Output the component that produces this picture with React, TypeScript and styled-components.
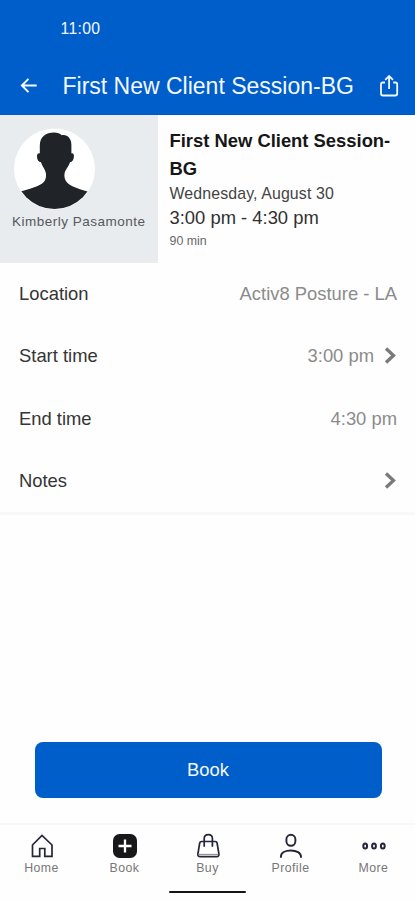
import React from "react";
import styled, { createGlobalStyle } from "styled-components";

const GlobalStyle = createGlobalStyle`
  * { box-sizing: border-box; }
  body { margin: 0; background: #fefefe; font-family: "Liberation Sans", Arial, sans-serif; }
  button { font-family: inherit; border: 0; padding: 0; background: none; }
  svg { display: block; flex: none; }
`;

const Screen = styled.div`
  width: 415px;
  height: 900px;
  display: flex;
  flex-direction: column;
  overflow: hidden;
  background: #fefefe;
`;

const Header = styled.header`
  height: 115px;
  flex: none;
  color: #f4f8ff;
  background: #005ecb;
  border-bottom: 1px solid #0057c6;
`;

const StatusBar = styled.div`
  height: 57px;
  padding-left: 60.5px;
  font-size: 15.7px;
  line-height: 57px;
  letter-spacing: 0.35px;
`;

const TitleBar = styled.div`
  height: 57px;
  display: flex;
  align-items: center;
  padding: 0 15px 0 17px;
`;

const Title = styled.h1`
  flex: 1;
  margin: 0 0 0 21.5px;
  font-size: 23px;
  line-height: 30px;
  font-weight: 400;
  white-space: nowrap;
`;

const Summary = styled.section`
  height: 148px;
  flex: none;
  display: flex;
`;

const StaffPanel = styled.div`
  width: 158px;
  padding: 13px 0 0 12px;
  background: #e8ecef;
`;

const Avatar = styled.svg`
  margin-left: 1px;
`;

const StaffName = styled.div`
  margin-top: 2px;
  color: #55585b;
  font-size: 13.5px;
  line-height: 20px;
  letter-spacing: 0.5px;
  white-space: nowrap;
`;

const SessionInfo = styled.div`
  flex: 1;
  padding: 12px 0 0 11.5px;
  color: #232323;
`;

const SessionName = styled.h2`
  margin: 0;
  font-size: 18.4px;
  line-height: 27.5px;
  color: #161616;
`;

const SessionDate = styled.div`
  margin-top: 1px;
  font-size: 15.9px;
  line-height: 22px;
  letter-spacing: 0.12px;
  color: #444;
`;

const SessionTime = styled.div`
  font-size: 18.4px;
  line-height: 26px;
  color: #303030;
`;

const Duration = styled.div`
  font-size: 12.4px;
  line-height: 20px;
  color: #686868;
`;

const Details = styled.section`
  height: 252px;
  flex: none;
  border-bottom: 3px solid #f8f8f8;
`;

const DetailRow = styled.div`
  height: 62.3px;
  display: flex;
  align-items: center;
  justify-content: space-between;
  padding: 0 18px 0 19px;
  font-size: 18.4px;
  color: #353535;
`;

const DetailValue = styled.div`
  display: flex;
  align-items: center;
  gap: 10px;
  color: #8b8b8b;
`;

const Action = styled.main`
  flex: 1;
  display: flex;
  align-items: flex-end;
  padding: 0 33.5px 25px 34.5px;
`;

const BookButton = styled.button`
  width: 100%;
  height: 56px;
  border-radius: 8px;
  background: #005ecb;
  color: #f4f8ff;
  font-size: 18.4px;
`;

const Navigation = styled.nav`
  height: 77px;
  flex: none;
  display: flex;
  flex-direction: column;
  border-top: 2px solid #f7f7f7;
`;

const Tabs = styled.div`
  height: 66px;
  display: grid;
  grid-template-columns: repeat(5, 1fr);
`;

const Tab = styled.button`
  display: flex;
  flex-direction: column;
  align-items: center;
  padding-top: 6px;
  color: #777;
  font-size: 12.3px;
  line-height: 14px;
  letter-spacing: 0.45px;
`;

const HomeIndicator = styled.div`
  width: 77px;
  height: 2px;
  align-self: center;
  border-radius: 1px;
  background: #141414;
`;

const Chevron = () => (
  <svg width="13" height="18" viewBox="0 0 13 18" fill="none" stroke="#7a7a7a" strokeWidth="3.3">
    <path d="m2 1.5 7.5 7L2 15.5" />
  </svg>
);

type DetailProps = { label: string; value?: string; opens?: boolean };

const Detail = ({ label, value, opens }: DetailProps) => (
  <DetailRow>
    <span>{label}</span>
    <DetailValue>
      {value}
      {opens && <Chevron />}
    </DetailValue>
  </DetailRow>
);

const iconProps = {
  width: 30,
  height: 30,
  viewBox: "0 0 30 30",
  fill: "none",
  stroke: "#25253a",
  strokeWidth: 1.7,
};

const tabs = [
  {
    label: "Home",
    icon: (
      <svg {...iconProps}>
        <path d="M5.5 14 15 4.5l10 9.5v11.3h-7.2v-7.8h-5.1v7.8H5.5Z" />
      </svg>
    ),
  },
  {
    label: "Book",
    icon: (
      <svg {...iconProps} stroke="#fff" strokeWidth="2.3">
        <rect x="3" y="3" width="24" height="24" rx="6.5" fill="#18181a" stroke="none" />
        <path d="M15 8.5v13M8.5 15h13" />
      </svg>
    ),
  },
  {
    label: "Buy",
    icon: (
      <svg {...iconProps}>
        <path d="M8.6 10.5h13.6c1.1 0 1.7.5 1.9 1.5l1.8 10.8c.3 1.8-.6 2.9-2.3 2.9H7.2c-1.7 0-2.6-1.1-2.3-2.9L6.7 12c.2-1 .8-1.5 1.9-1.5ZM11.2 15.7V7.6c0-2.4 1.4-4 4.1-4s4.1 1.6 4.1 4v8.1" />
        <path d="M5.5 23.4h19.8" stroke="#85858f" strokeWidth="1" />
      </svg>
    ),
  },
  {
    label: "Profile",
    icon: (
      <svg {...iconProps} strokeWidth="1.9">
        <rect x="10.4" y="3.8" width="9" height="11" rx="4.5" />
        <path d="M4.9 26.8v-1c0-4 4.4-6.3 10-6.3s10.1 2.3 10.1 6.3v1" />
      </svg>
    ),
  },
  {
    label: "More",
    icon: (
      <svg {...iconProps} strokeWidth="2">
        <ellipse cx="6.2" cy="15" rx="1.9" ry="2.5" />
        <ellipse cx="15" cy="15" rx="1.9" ry="2.5" />
        <ellipse cx="23.8" cy="15" rx="1.9" ry="2.5" />
      </svg>
    ),
  },
];

export default function App() {
  return (
    <>
      <GlobalStyle />
      <Screen>
        <Header>
          <StatusBar>11:00</StatusBar>
          <TitleBar>
            <svg width="24" height="24" viewBox="0 0 24 24" fill="none" stroke="currentColor" strokeWidth="2">
              <path d="M19.7 11.5H5M11.5 4.9l-6.6 6.6 6.6 6.6" />
            </svg>
            <Title>First New Client Session-BG</Title>
            <svg width="22" height="24" viewBox="0 0 22 24" fill="none" stroke="currentColor" strokeWidth="1.8">
              <path d="M7 8.5H4.8Q3 8.5 3 10.3v9.2q0 2 2 2h12.2q2 0 2-2v-9.2q0-1.8-1.8-1.8h-2.2M11.1 15V2M7.2 5.9l3.9-3.9 3.9 3.9" />
            </svg>
          </TitleBar>
        </Header>
        <Summary>
          <StaffPanel>
            <Avatar width="82" height="82" viewBox="0 0 82 82">
              <defs>
                <clipPath id="avatar-circle">
                  <circle cx="41.5" cy="41" r="40" />
                </clipPath>
              </defs>
              <circle cx="41.5" cy="41" r="40.5" fill="#fff" />
              <path
                clipPath="url(#avatar-circle)"
                fill="#202428"
                d="M6 64 17 60.8 24 58.2C30.5 56 33.5 52.5 33 46 32.7 42 29.5 39 28 34.3 25.5 34 24 31.5 24 28.5 24 26 25 25 26.8 25.4V17.5C26.8 9 33 4.6 41 4.6 44.5 4.6 47 5.6 48.7 7.2 54 6 58.4 10 58.4 17V25.4C60.2 25 61 26 60.9 28.5 60.8 31.5 59.3 34 57 34.3 55.5 39 52 42 51.5 46 50.8 52 54 56 60 58.5L67 61.2 76 64 73 82H9Z"
              />
            </Avatar>
            <StaffName>Kimberly Pasamonte</StaffName>
          </StaffPanel>
          <SessionInfo>
            <SessionName>First New Client Session-BG</SessionName>
            <SessionDate>Wednesday, August 30</SessionDate>
            <SessionTime>3:00 pm - 4:30 pm</SessionTime>
            <Duration>90 min</Duration>
          </SessionInfo>
        </Summary>
        <Details>
          <Detail label="Location" value="Activ8 Posture - LA" />
          <Detail label="Start time" value="3:00 pm" opens />
          <Detail label="End time" value="4:30 pm" />
          <Detail label="Notes" opens />
        </Details>
        <Action>
          <BookButton>Book</BookButton>
        </Action>
        <Navigation>
          <Tabs>
            {tabs.map(({ label, icon }) => (
              <Tab key={label}>
                {icon}
                {label}
              </Tab>
            ))}
          </Tabs>
          <HomeIndicator />
        </Navigation>
      </Screen>
    </>
  );
}
